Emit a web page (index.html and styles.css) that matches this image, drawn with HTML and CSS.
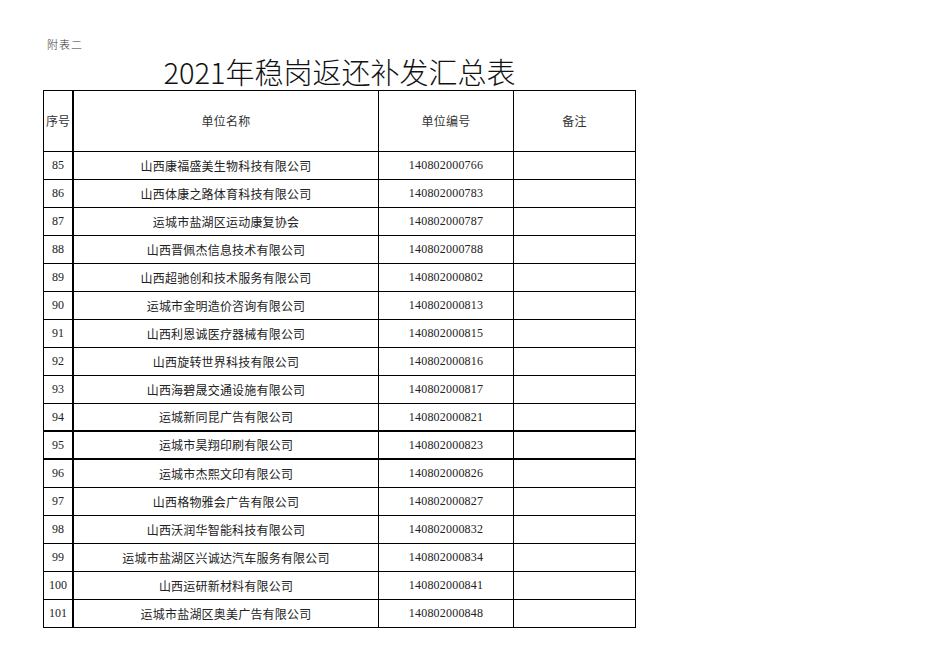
FILE: index.html
```html
<!DOCTYPE html>
<html lang="zh-CN">
<head>
<meta charset="utf-8">
<title>2021年稳岗返还补发汇总表</title>
<link rel="stylesheet" href="styles.css">
</head>
<body>
<div class="sheet">
  <div class="note">附表二</div>
  <h1 class="title">2021年稳岗返还补发汇总表</h1>
  <table class="grid">
    <colgroup>
      <col class="c-no">
      <col class="c-name">
      <col class="c-code">
      <col class="c-memo">
    </colgroup>
    <thead>
      <tr class="head">
        <th class="no">序号</th>
        <th>单位名称</th>
        <th>单位编号</th>
        <th>备注</th>
      </tr>
    </thead>
    <tbody>
      <tr><td class="no">85</td><td>山西康福盛美生物科技有限公司</td><td>140802000766</td><td></td></tr>
      <tr><td class="no">86</td><td>山西体康之路体育科技有限公司</td><td>140802000783</td><td></td></tr>
      <tr><td class="no">87</td><td>运城市盐湖区运动康复协会</td><td>140802000787</td><td></td></tr>
      <tr><td class="no">88</td><td>山西晋佩杰信息技术有限公司</td><td>140802000788</td><td></td></tr>
      <tr><td class="no">89</td><td>山西超驰创和技术服务有限公司</td><td>140802000802</td><td></td></tr>
      <tr><td class="no">90</td><td>运城市金明造价咨询有限公司</td><td>140802000813</td><td></td></tr>
      <tr><td class="no">91</td><td>山西利恩诚医疗器械有限公司</td><td>140802000815</td><td></td></tr>
      <tr><td class="no">92</td><td>山西旋转世界科技有限公司</td><td>140802000816</td><td></td></tr>
      <tr><td class="no">93</td><td>山西海碧晟交通设施有限公司</td><td>140802000817</td><td></td></tr>
      <tr class="bold-bottom"><td class="no">94</td><td>运城新同昆广告有限公司</td><td>140802000821</td><td></td></tr>
      <tr class="bold-bottom"><td class="no">95</td><td>运城市昊翔印刷有限公司</td><td>140802000823</td><td></td></tr>
      <tr><td class="no">96</td><td>运城市杰熙文印有限公司</td><td>140802000826</td><td></td></tr>
      <tr><td class="no">97</td><td>山西格物雅会广告有限公司</td><td>140802000827</td><td></td></tr>
      <tr><td class="no">98</td><td>山西沃润华智能科技有限公司</td><td>140802000832</td><td></td></tr>
      <tr><td class="no">99</td><td>运城市盐湖区兴诚达汽车服务有限公司</td><td>140802000834</td><td></td></tr>
      <tr><td class="no">100</td><td>山西运研新材料有限公司</td><td>140802000841</td><td></td></tr>
      <tr><td class="no">101</td><td>运城市盐湖区奥美广告有限公司</td><td>140802000848</td><td></td></tr>
    </tbody>
  </table>
</div>
</body>
</html>
```

FILE: styles.css
```css
html, body {
  margin: 0;
  padding: 0;
  background: #ffffff;
}

body {
  font-family: "Liberation Serif", "Noto Sans CJK SC", serif;
  color: #222222;
}

.sheet {
  padding: 37px 0 0 43px;
  width: 593px;
}

.note {
  margin-left: 4px;
  font-family: "Noto Sans CJK SC", sans-serif;
  font-size: 11px;
  font-weight: 300;
  line-height: 14px;
  letter-spacing: 1px;
  color: #333333;
}

.title {
  margin: 2px 0 0 0;
  height: 37px;
  font-family: "Noto Sans CJK SC", sans-serif;
  font-weight: 300;
  font-size: 29px;
  line-height: 37px;
  letter-spacing: 0;
  text-align: center;
  color: #111111;
}

.grid {
  table-layout: fixed;
  border-collapse: separate;
  border-spacing: 0;
  width: 593px;
  border-top: 1px solid #000;
  border-left: 1px solid #000;
}

.c-no { width: 30px; }
.c-name { width: 305px; }
.c-code { width: 135px; }
.c-memo { width: 122px; }

.grid th,
.grid td {
  box-sizing: border-box;
  padding: 0;
  border-right: 1px solid #000;
  border-bottom: 1px solid #000;
  text-align: center;
  vertical-align: middle;
  font-size: 12px;
  font-weight: 400;
  letter-spacing: 0.2px;
  white-space: nowrap;
  overflow: hidden;
  color: #222222;
}

.grid th {
  height: 61px;
  color: #333333;
}

.grid td {
  height: 28px;
}

.grid .no {
  border-right-width: 2px;
  letter-spacing: 0;
}

.grid tr.bold-bottom td {
  border-bottom-width: 2px;
}
```
